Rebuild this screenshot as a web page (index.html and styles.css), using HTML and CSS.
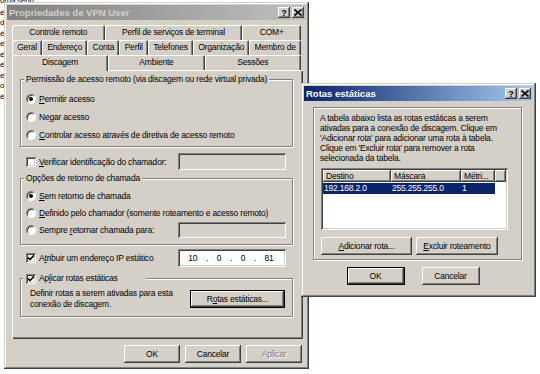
FILE: index.html
```html
<!DOCTYPE html>
<html lang="pt-BR">
<head>
    <meta charset="UTF-8">
    <title>Propriedades de VPN User</title>
    <link rel="stylesheet" href="styles.css">
</head>
<body>
<div class="desk">
    <div class="back-text">
        <div class="back-top">orna senh...</div>
        <div>é</div>
        <div>d</div>
        <div>é</div>
        <div>é</div>
        <div>é</div>
        <div>é</div>
        <div>é</div>
        <div>o</div>
        <div>é</div>
    </div>

    <div class="window main-win">
        <div class="titlebar inactive">
            <span class="title">Propriedades de VPN User</span>
            <span class="title-btn help">?</span>
            <span class="title-btn close">
                <svg width="8" height="7" viewBox="0 0 8 7"><path d="M0.5 0.5 L7.5 6.5 M7.5 0.5 L0.5 6.5" stroke="#000" stroke-width="1.6"/></svg>
            </span>
        </div>
        <div class="win-body">
            <div class="tabs">
                <div class="tab-row">
                    <div class="tab">Controle remoto</div>
                    <div class="tab">Perfil de serviços de terminal</div>
                    <div class="tab">COM+</div>
                </div>
                <div class="tab-row">
                    <div class="tab">Geral</div>
                    <div class="tab">Endereço</div>
                    <div class="tab">Conta</div>
                    <div class="tab">Perfil</div>
                    <div class="tab">Telefones</div>
                    <div class="tab">Organização</div>
                    <div class="tab">Membro de</div>
                </div>
                <div class="tab-row front">
                    <div class="tab active">Discagem</div>
                    <div class="tab">Ambiente</div>
                    <div class="tab">Sessões</div>
                </div>
            </div>

            <div class="panel">
                <div class="group group-access">
                    <div class="legend">Permissão de acesso remoto (via discagem ou rede virtual privada)</div>
                    <div class="opt-list">
                        <div class="opt"><span class="radio on"></span><span><u>P</u>ermitir acesso</span></div>
                        <div class="opt"><span class="radio"></span><span>Ne<u>g</u>ar acesso</span></div>
                        <div class="opt"><span class="radio"></span><span><u>C</u>ontrolar acesso através de diretiva de acesso remoto</span></div>
                    </div>
                </div>

                <div class="field-row row-caller">
                    <div class="opt"><span class="check"></span><span><u>V</u>erificar identificação do chamador:</span></div>
                    <span class="field off"></span>
                </div>

                <div class="group group-callback">
                    <div class="legend">Opções de retorno de chamada</div>
                    <div class="opt-list tight">
                        <div class="opt"><span class="radio on"></span><span><u>S</u>em retorno de chamada</span></div>
                        <div class="opt"><span class="radio"></span><span><u>D</u>efinido pelo chamador (somente roteamento e acesso remoto)</span></div>
                        <div class="field-row inner">
                            <div class="opt"><span class="radio"></span><span>Sempre <u>r</u>etornar chamada para:</span></div>
                            <span class="field off"></span>
                        </div>
                    </div>
                </div>

                <div class="field-row row-ip">
                    <div class="opt"><span class="check on"><svg width="8" height="8" viewBox="0 0 8 8"><path d="M1 3.5 L3 5.6 L7 1.4" stroke="#000" stroke-width="1.6" fill="none"/></svg></span><span>A<u>t</u>ribuir um endereço IP estático</span></div>
                    <span class="field ip">
                        <span>10</span><span>.</span><span>0</span><span>.</span><span>0</span><span>.</span><span>81</span>
                    </span>
                </div>

                <div class="group group-routes">
                    <div class="legend check-legend">
                        <span class="check on"><svg width="8" height="8" viewBox="0 0 8 8"><path d="M1 3.5 L3 5.6 L7 1.4" stroke="#000" stroke-width="1.6" fill="none"/></svg></span>
                        <span>Ap<u>l</u>icar rotas estáticas</span>
                    </div>
                    <div class="routes-row">
                        <div class="routes-text">Definir rotas a serem ativadas para esta<br>conexão de discagem.</div>
                        <div class="btn btn-routes">R<u>o</u>tas estáticas...</div>
                    </div>
                </div>
            </div>

            <div class="footer">
                <div class="btn">OK</div>
                <div class="btn">Cancelar</div>
                <div class="btn disabled">Aplicar</div>
            </div>
        </div>
    </div>

    <div class="window routes-win">
        <div class="titlebar active">
            <span class="title">Rotas estáticas</span>
            <span class="title-btn help">?</span>
            <span class="title-btn close">
                <svg width="8" height="7" viewBox="0 0 8 7"><path d="M0.5 0.5 L7.5 6.5 M7.5 0.5 L0.5 6.5" stroke="#000" stroke-width="1.6"/></svg>
            </span>
        </div>
        <div class="routes-body">
            <div class="group group-list">
                <p class="info">A tabela abaixo lista as rotas estáticas a serem<br>ativadas para a conexão de discagem. Clique em<br>'Adicionar rota' para adicionar uma rota à tabela.<br>Clique em 'Excluir rota' para remover a rota<br>selecionada da tabela.</p>
                <div class="listview">
                    <div class="lv-head">
                        <span class="col c1">Destino</span>
                        <span class="col c2">Máscara</span>
                        <span class="col c3">Métri...</span>
                        <span class="col c4"></span>
                    </div>
                    <div class="lv-row selected">
                        <span class="c1">192.168.2.0</span>
                        <span class="c2">255.255.255.0</span>
                        <span class="c3">1</span>
                    </div>
                </div>
                <div class="list-btns">
                    <div class="btn btn-add"><u>A</u>dicionar rota...</div>
                    <div class="btn btn-del"><u>E</u>xcluir roteamento</div>
                </div>
            </div>
            <div class="footer centered">
                <div class="btn default">OK</div>
                <div class="btn">Cancelar</div>
            </div>
        </div>
    </div>
</div>
</body>
</html>
```

FILE: styles.css
```css
body {
    margin: 0;
    background-color: #ffffff;
    font-family: "Liberation Sans", Arial, sans-serif;
    font-size: 8.5px;
    letter-spacing: -0.2px;
    color: #000;
}
.desk {
    position: relative;
    width: 540px;
    height: 374px;
    overflow: hidden;
}
u {
    text-decoration: underline;
    text-underline-offset: 1px;
}

/* bits of the window behind */
.back-text {
    position: absolute;
    left: 0;
    top: 0;
    line-height: 10.5px;
    font-size: 8px;
}
.back-top {
    margin-top: -4px;
    margin-bottom: 1px;
}

/* classic windows */
.window {
    position: absolute;
    box-sizing: border-box;
    padding: 3px;
    background-color: #d4d0c8;
    box-shadow: inset -1px -1px #404040, inset 1px 1px #d4d0c8, inset -2px -2px #808080, inset 2px 2px #ffffff;
}
.main-win {
    left: 4px;
    top: 2px;
    width: 305px;
    height: 367px;
}
.routes-win {
    left: 301px;
    top: 83px;
    width: 235px;
    height: 214px;
}
.titlebar {
    display: flex;
    align-items: center;
    height: 15px;
    padding: 0 2px 0 2px;
    gap: 2px;
}
.titlebar.inactive {
    background: linear-gradient(to right, #808080, #c0c0c0);
    color: #d4d0c8;
}
.titlebar.active {
    background: linear-gradient(to right, #0a246a, #a6caf0);
    color: #ffffff;
}
.title {
    flex: 1;
    font-weight: bold;
    font-size: 9.5px;
    letter-spacing: 0;
}
.title-btn {
    width: 12px;
    height: 11px;
    box-sizing: border-box;
    display: flex;
    align-items: center;
    justify-content: center;
    background-color: #d4d0c8;
    color: #000;
    font-weight: bold;
    font-size: 9px;
    box-shadow: inset -1px -1px #404040, inset 1px 1px #ffffff, inset -2px -2px #808080;
}

/* tabs */
.win-body {
    padding: 5px 3px 0 5px;
}
.tabs {
    margin-right: 2px;
}
.tab-row {
    display: flex;
    align-items: flex-start;
}
.tab {
    flex: 1 1 auto;
    height: 15px;
    line-height: 15px;
    text-align: center;
    white-space: nowrap;
    padding: 0 3px;
    border-radius: 2px 2px 0 0;
    box-shadow: inset 1px 1px #ffffff, inset -1px 0 #404040, inset -2px 0 #808080;
}
.tab-row.front .tab {
    flex: 1 1 0;
}
.tab.active {
    position: relative;
    z-index: 1;
    height: 16px;
    margin-bottom: -1px;
    background-color: #d4d0c8;
}

.panel {
    height: 269px;
    padding-top: 9px;
    box-sizing: border-box;
    box-shadow: inset 1px 1px #ffffff, inset -1px -1px #404040, inset -2px -2px #808080;
}

/* group boxes */
.group {
    border: 1px solid #808080;
    box-shadow: inset 1px 1px #ffffff, 1px 1px #ffffff;
    margin: 0 10px 0 8px;
}
.legend {
    width: fit-content;
    margin: -6px 0 0 3px;
    padding: 0 2px;
    line-height: 11px;
    background-color: #d4d0c8;
    white-space: nowrap;
}
.opt-list {
    padding: 5px 0 2px 5px;
}
.opt-list.tight {
    padding: 3px 6px 6px 5px;
}
.opt {
    display: flex;
    align-items: center;
    gap: 3px;
    height: 18px;
    white-space: nowrap;
}
.opt-list.tight .opt {
    height: 17px;
}
.radio {
    position: relative;
    width: 10px;
    height: 10px;
    box-sizing: border-box;
    border-radius: 50%;
    background-color: #ffffff;
    border: 1px solid;
    border-color: #808080 #ffffff #ffffff #808080;
    box-shadow: inset 1px 1px #404040;
}
.radio.on::after {
    content: "";
    position: absolute;
    left: 2px;
    top: 2px;
    width: 4px;
    height: 4px;
    border-radius: 50%;
    background-color: #000;
}
.check {
    width: 10px;
    height: 10px;
    box-sizing: border-box;
    display: flex;
    align-items: center;
    justify-content: center;
    background-color: #ffffff;
    box-shadow: inset 1px 1px #808080, inset -1px -1px #ffffff, inset 2px 2px #404040, inset -2px -2px #d4d0c8;
}

/* rows with a text field on the right */
.field-row {
    display: flex;
    align-items: center;
    justify-content: space-between;
    height: 17px;
}
.row-caller {
    margin: 6px 17px 0 14px;
}
.field {
    width: 108px;
    height: 17px;
    box-sizing: border-box;
    background-color: #ffffff;
    box-shadow: inset 1px 1px #808080, inset -1px -1px #ffffff, inset 2px 2px #404040, inset -2px -2px #d4d0c8;
}
.field.off {
    background-color: #d4d0c8;
}
.field-row.inner .field {
    height: 16px;
}
.field.ip {
    display: flex;
    align-items: center;
    justify-content: space-around;
    padding: 0 8px 0 6px;
    height: 18px;
}
.group-callback {
    margin-top: 8px;
}
.row-ip {
    margin: 4px 17px 0 14px;
    height: 18px;
}
.group-routes {
    margin-top: 11px;
}
.check-legend {
    display: flex;
    align-items: center;
    gap: 3px;
    width: 120px;
    margin-left: 2px;
    padding: 0 0 0 3px;
}
.routes-row {
    display: flex;
    align-items: center;
    justify-content: space-between;
    padding: 4px 7px 6px 9px;
}
.routes-text {
    line-height: 11px;
}

/* buttons */
.btn {
    display: flex;
    align-items: center;
    justify-content: center;
    height: 18px;
    box-sizing: border-box;
    background-color: #d4d0c8;
    white-space: nowrap;
    box-shadow: inset -1px -1px #404040, inset 1px 1px #ffffff, inset -2px -2px #808080;
}
.btn.default {
    box-shadow: inset 0 0 0 1px #000000, inset -2px -2px #404040, inset 2px 2px #ffffff, inset -3px -3px #808080;
}
.btn.disabled {
    color: #808080;
    text-shadow: 1px 1px #ffffff;
}
.btn-routes {
    width: 95px;
    box-shadow: inset 0 0 0 1px #000000, inset -2px -2px #404040, inset 2px 2px #ffffff, inset -3px -3px #808080;
}
.footer {
    display: flex;
    justify-content: flex-end;
    gap: 5px;
    margin: 6px 1px 0 0;
}
.footer .btn {
    width: 56px;
}

/* static routes dialog */
.routes-body {
    padding: 6px 11px 0 9px;
}
.group-list {
    margin: 0;
    padding: 5px 13px 4px 6px;
}
.info {
    margin: 0;
    line-height: 10px;
    white-space: nowrap;
}
.listview {
    height: 62px;
    margin: 5px 0 0 1px;
    padding: 2px;
    box-sizing: border-box;
    background-color: #ffffff;
    box-shadow: inset 1px 1px #808080, inset -1px -1px #ffffff, inset 2px 2px #404040, inset -2px -2px #d4d0c8;
}
.lv-head {
    display: flex;
    height: 12px;
}
.lv-head .col {
    height: 12px;
    line-height: 12px;
    padding-left: 3px;
    box-sizing: border-box;
    background-color: #d4d0c8;
    box-shadow: inset -1px -1px #404040, inset 1px 1px #ffffff, inset -2px -2px #808080;
}
.c1 { width: 68px; }
.c2 { width: 70px; }
.c3 { width: 34px; }
.lv-head .c4 { flex: 1; }
.lv-row {
    display: flex;
    height: 11px;
    line-height: 11px;
    margin-top: 1px;
}
.lv-row span {
    padding-left: 1px;
    box-sizing: border-box;
}
.lv-row.selected span {
    background-color: #0a246a;
    color: #ffffff;
}
.list-btns {
    display: flex;
    gap: 4px;
    margin: 7px 0 0 1px;
}
.btn-add {
    width: 91px;
}
.btn-del {
    width: 82px;
}
.footer.centered {
    justify-content: center;
    gap: 17px;
    margin: 7px 9px 0 0;
}
.footer.centered .btn {
    width: 58px;
}
```
